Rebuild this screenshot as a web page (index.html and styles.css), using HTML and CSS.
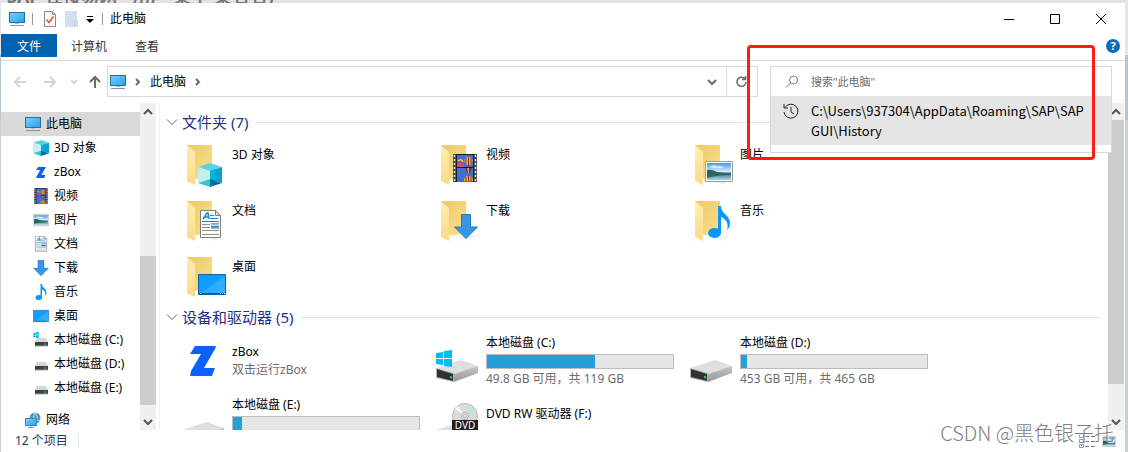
FILE: index.html
```
<!DOCTYPE html>
<html lang="zh-CN">

<head>
    <meta charset="UTF-8">
    <meta name="viewport" content="width=device-width, initial-scale=1.0">
    <title>此电脑</title>
    <link rel="stylesheet" href="styles.css">
</head>

<body>
    <!-- icon sprite -->
    <svg class="sprite" aria-hidden="true">
        <defs>
            <linearGradient id="gBlue" x1="0" y1="0" x2="1" y2="1">
                <stop offset="0" stop-color="#7fd0ff" />
                <stop offset="1" stop-color="#1fa2f5" />
            </linearGradient>
            <linearGradient id="gDesk" x1="0" y1="0" x2="1" y2="1">
                <stop offset="0" stop-color="#0c9bff" />
                <stop offset=".5" stop-color="#0f9dff" />
                <stop offset=".52" stop-color="#2ba9ff" />
                <stop offset="1" stop-color="#3db0ff" />
            </linearGradient>
            <linearGradient id="gFolder" x1="0" y1="0" x2="1" y2="1">
                <stop offset="0" stop-color="#ecc866" />
                <stop offset="1" stop-color="#fde18d" />
            </linearGradient>
            <linearGradient id="gFlap" x1="0" y1="0" x2="0" y2="1">
                <stop offset="0" stop-color="#ffedb0" />
                <stop offset="1" stop-color="#fbdc85" />
            </linearGradient>
            <linearGradient id="gSide" x1="0" y1="0" x2="0" y2="1">
                <stop offset="0" stop-color="#c6c6c8" />
                <stop offset="1" stop-color="#96969a" />
            </linearGradient>
            <linearGradient id="gSky" x1="0" y1="0" x2="0" y2="1">
                <stop offset="0" stop-color="#4f94e8" />
                <stop offset=".5" stop-color="#d5ecfb" />
                <stop offset=".6" stop-color="#3b7580" />
                <stop offset="1" stop-color="#a9d5e6" />
            </linearGradient>
        </defs>
        <symbol id="pc" viewBox="0 0 16 16">
            <rect x=".5" y="1.500" width="15" height="10" fill="url(#gBlue)" stroke="#2d6d96" />
            <path d="M6 12h4v1H6z" fill="#a9c3d3" />
            <path d="M1 14.500h14" stroke="#7e98a8" />
        </symbol>
        <symbol id="cube" viewBox="0 0 24 24">
            <path d="M12 0l12 4-12 4L0 4z" fill="#58d3e2" />
            <path d="M0 4l12 4v8L0 20z" fill="#c3eff0" />
            <path d="M24 4l-12 4v8l12 4z" fill="#0b9fd8" />
            <path d="M12 8l5-2v12l-5-2z" fill="#06b5d6" />
            <path d="M0 20l12-4v8z" fill="#2fc6d8" />
            <path d="M24 20l-12-4v8z" fill="#066f8a" />
        </symbol>
        <symbol id="zlogo" viewBox="0 0 26 30">
            <path d="M5 0h21l-1 3-11 19h11l-3 8H0l1-5L11 8H0z" fill="#0b62fb" />
        </symbol>
        <symbol id="film" viewBox="0 0 24 28">
            <path d="M0 0h24v28H0z" fill="#4a4a4a" />
            <path d="M1.500 1v27M22.500 1v27" stroke="#e6e6e6" stroke-width="1.500" stroke-dasharray="2 2" />
            <path d="M3 0h18v28H3z" fill="#1c1c1c" />
            <path d="M4 1h16v12H4zM4 14h16v14H4z" fill="#3d6fd6" />
            <path d="M4 10q3-3 7 0v3H4z" fill="#d8457c" />
            <path d="M5 7q3-3 5 1" stroke="#e9cf30" stroke-width="1.500" fill="none" />
            <circle cx="15.500" cy="7" r="4" fill="#f0b81c" />
            <path d="M13 4v6M15.500 3v9M18 4v6" stroke="#8c2a30" />
            <path d="M12 14h7l-2.500 5h-2z" fill="#84262c" />
            <path d="M14 14h2v5h-1z" fill="#e7a61c" />
            <path d="M11 27q0-5 4.500-5t4.500 5z" fill="#f0b81c" />
            <path d="M13 23v4M15.500 22v5M18 23v4" stroke="#8c2a30" />
        </symbol>
        <symbol id="photo" viewBox="0 0 28 21">
            <path d="M.5.5h27v20H.5z" fill="#fff" stroke="#9a9a9a" />
            <path d="M2 2h24v17H2z" fill="url(#gSky)" />
            <path d="M2 9q5-1 10 2l14 2v1q-14 0-24 3z" fill="#2f6560" />
            <path d="M4 6q4-3 8-1 5-1 7 2-8 1-15-1z" fill="#e9f5ff" opacity=".8" />
        </symbol>
        <symbol id="doc" viewBox="0 0 21 28">
            <path d="M.5.5h15l5 5v22H.5z" fill="#fbfbfb" stroke="#7f7f7f" />
            <path d="M15.500.5v5h5z" fill="#d8d8d8" stroke="#7f7f7f" />
            <path d="M3 9l4-6h1l1 6M5 7h4" fill="none" stroke="#1c86c8" stroke-width="1.500" />
            <path d="M10 5.500h4M10 8.500h8M2 11.500h17" stroke="#1c86c8" />
            <path d="M2 14.500h8M2 17.500h8M2 20.500h17M2 24.500h17" stroke="#8d8d8d" />
            <path d="M11 13h8v6h-8z" fill="url(#gSky)" />
        </symbol>
        <symbol id="down" viewBox="0 0 24 25">
            <path d="M7.500.5h9V13h7L12 24.500.5 13h7z" fill="#3797e6" stroke="#1f76c2" />
        </symbol>
        <symbol id="music" viewBox="0 0 22 32">
            <ellipse cx="6.500" cy="27" rx="6.500" ry="5" fill="#0a98f7" />
            <path d="M10 0h3c0 8 9 9 9 17 0 3-1 5-3 7 2-7-1-11-6-13v16h-3z" fill="#0a98f7" />
        </symbol>
        <symbol id="desk" viewBox="0 0 28 21">
            <path d="M.5.5h27v20H.5z" fill="url(#gDesk)" stroke="#0b66a8" />
            <path d="M1 19.500h26" stroke="#0a5c9c" />
            <path d="M2 19.500h1M22 19.500h1M24 19.500h1M26 19.500h1" stroke="#fff" />
        </symbol>
        <symbol id="drive16" viewBox="0 0 16 16">
            <path d="M4 6h9l2 4H2z" fill="#d6d7d9" />
            <path d="M2 10h13v4H2z" fill="#3d3f41" />
            <path d="M2 14h13" stroke="#a5a5a5" />
            <path d="M11 11.500h2v1h-2z" fill="#36e04a" />
        </symbol>
        <symbol id="win" viewBox="0 0 16 17">
            <path d="M0 3l7-1v6H0zM8 1l8-1v8H8zM0 9h7v6l-7-1zM8 9h8v8l-8-1z" fill="#00bcf2" />
        </symbol>
        <symbol id="drive" viewBox="0 0 48 48">
            <path d="M0 31l25-8 17 6-24 8z" fill="#dedfe3" />
            <path d="M18 37l24-8v7l-24 9z" fill="url(#gSide)" />
            <path d="M0 31l18 5v9L0 41z" fill="#b5b5b7" />
            <path d="M1 32l16 5v7L1 40z" fill="#303234" />
            <path d="M14 39l2 .6v2l-2-.6z" fill="#2de23c" />
        </symbol>
        <symbol id="folder" viewBox="0 0 48 48">
            <path d="M14 37h26l-6 6z" fill="#e8e8e8" opacity=".5" />
            <path d="M5 3h25v33l-17 1z" fill="url(#gFolder)" />
            <path d="M5 3l8 7v33l-8-4z" fill="url(#gFlap)" />
        </symbol>
        <symbol id="net" viewBox="0 0 16 16">
            <circle cx="10" cy="6" r="5.500" fill="#5a96b4" />
            <path d="M8 1q5 1 4 5t3 2M11 1q-4 3-2 6" fill="none" stroke="#bfe0ef" />
            <path d="M.5 6.500h11v7H.5z" fill="url(#gBlue)" stroke="#3d86b4" />
            <path d="M3 15.500h6M6 14v2" stroke="#87a2b3" />
        </symbol>
        <symbol id="chev" viewBox="0 0 12 12">
            <path d="M1 3.500l5 5 5-5" fill="none" stroke="currentColor" />
        </symbol>
        <symbol id="chevBold" viewBox="0 0 12 12">
            <path d="M2 4l4 4 4-4" fill="none" stroke="currentColor" stroke-width="2" />
        </symbol>
    </svg>

    <div class="behind" aria-hidden="true">SAP 在接易网 - 用户 某个 某名名)</div>

    <div class="window">
        <header class="titlebar">
            <svg class="i16"><use href="#pc" /></svg>
            <span class="sep"></span>
            <button class="quick" aria-label="属性">
                <svg width="12" height="16" viewBox="0 0 12 16">
                    <path d="M.5.5h8l3 3v12H.5z" fill="#fafafa" stroke="#8a8a8a" />
                    <path d="M8.500.5v3h3" fill="none" stroke="#8a8a8a" />
                    <path d="M2.500 8.500l2.500 3 4.500-6" fill="none" stroke="#e8561c" stroke-width="1.500" />
                </svg>
            </button>
            <button class="quick" aria-label="新建文件夹">
                <svg width="13" height="16" viewBox="0 0 13 16">
                    <path d="M0 0h12v9h1v7H0z" fill="#d3dff0" />
                    <path d="M9.500 15.500v-5l2-1.500" fill="none" stroke="#b9c9e2" />
                </svg>
            </button>
            <button class="quick caret" aria-label="自定义快速访问工具栏">
                <svg width="8" height="8" viewBox="0 0 8 8">
                    <path d="M1 1.500h6" stroke="#000" />
                    <path d="M0 4h8L4 8z" fill="#000" />
                </svg>
            </button>
            <span class="sep"></span>
            <h1>此电脑</h1>
            <div class="controls">
                <button aria-label="最小化"><svg width="10" height="10"><path d="M0 5.500h10" stroke="#000" /></svg></button>
                <button aria-label="最大化"><svg width="10" height="10"><path d="M.5.5h9v9h-9z" fill="none" stroke="#000" /></svg></button>
                <button aria-label="关闭"><svg width="10" height="10"><path d="M0 0l10 10M10 0L0 10" stroke="#000" /></svg></button>
            </div>
        </header>

        <nav class="tabs">
            <button class="tab file">文件</button>
            <button class="tab">计算机</button>
            <button class="tab">查看</button>
            <button class="help" aria-label="帮助">?</button>
        </nav>

        <div class="toolbar">
            <div class="history">
                <button aria-label="后退" disabled><svg width="12" height="12"><path d="M12 6H1M6 1L1 6l5 5" /></svg></button>
                <button aria-label="前进" disabled><svg width="12" height="12"><path d="M0 6h11M6 1l5 5-5 5" /></svg></button>
                <button class="recent" aria-label="最近浏览的位置" disabled><svg width="6" height="6"><path d="M0 1l3 3 3-3" /></svg></button>
                <button class="up" aria-label="上移"><svg width="12" height="13"><path d="M6 13V2M1 7l5-5 5 5" /></svg></button>
            </div>
            <div class="address">
                <svg class="i16"><use href="#pc" /></svg>
                <svg class="crumb" width="6" height="8"><path d="M1 1l3 3-3 3" /></svg>
                <a href="#">此电脑</a>
                <svg class="crumb" width="6" height="8"><path d="M1 1l3 3-3 3" /></svg>
                <button class="drop" aria-label="以前的位置"><svg width="12" height="12"><use href="#chevBold" /></svg></button>
            </div>
            <button class="refresh" aria-label="刷新">
                <svg width="12" height="12"><path d="M9 3a4.500 4.500 0 1 0 1 3M9.500 0v3.500H6" fill="none" stroke="#6a6a6a" stroke-width="1.500" /></svg>
            </button>
            <div class="search">
                <svg width="14" height="14" viewBox="0 0 14 14"><circle cx="8.500" cy="5" r="4" fill="none" stroke="#777" /><path d="M5.500 8L1 12.500" stroke="#777" /></svg>
                <input type="text" aria-label="搜索" placeholder="搜索&quot;此电脑&quot;">
                <div class="suggest">
                    <a href="#">
                        <svg width="16" height="16" viewBox="0 0 16 16">
                            <path d="M2 4.500A7 7 0 1 1 1 9M1 1v4h4M8 4v5l3 2" fill="none" stroke="#222" />
                        </svg>
                        <span>C:\Users\937304\AppData\Roaming\SAP\SAP GUI\History</span>
                    </a>
                </div>
            </div>
        </div>

        <main class="main">
            <ul class="tree">
                <li class="top selected"><svg class="i16"><use href="#pc" /></svg>此电脑</li>
                <li><svg class="i16"><use href="#cube" /></svg>3D 对象</li>
                <li><svg class="i16"><use href="#zlogo" x="3" y="3" width="10" height="11" /></svg>zBox</li>
                <li><svg class="i16"><use href="#film" /></svg>视频</li>
                <li><svg class="i16"><use href="#photo" /></svg>图片</li>
                <li><svg class="i16"><use href="#doc" /></svg>文档</li>
                <li><svg class="i16"><use href="#down" /></svg>下载</li>
                <li><svg class="i16"><use href="#music" /></svg>音乐</li>
                <li><svg class="i16"><use href="#desk" /></svg>桌面</li>
                <li><svg class="i16"><use href="#drive16" /><use href="#win" width="6" height="6" /></svg>本地磁盘 (C:)</li>
                <li><svg class="i16"><use href="#drive16" /></svg>本地磁盘 (D:)</li>
                <li><svg class="i16"><use href="#drive16" /></svg>本地磁盘 (E:)</li>
                <li class="top network"><svg class="i16"><use href="#net" /></svg>网络</li>
            </ul>
            <div class="scrollbar tree-scroll">
                <button class="flip" aria-label="向上滚动"><svg width="12" height="12"><use href="#chevBold" /></svg></button>
                <div class="track"><div class="thumb"></div></div>
                <button aria-label="向下滚动"><svg width="12" height="12"><use href="#chevBold" /></svg></button>
            </div>

            <div class="content">
                <section>
                    <h2><svg width="12" height="12"><use href="#chev" /></svg>文件夹 (7)</h2>
                    <div class="grid folders">
                        <div class="item"><svg class="i48"><use href="#folder" /><use href="#cube" x="16" y="21" width="24" height="24" /></svg><span>3D 对象</span></div>
                        <div class="item"><svg class="i48"><use href="#folder" /><use href="#film" x="17" y="12" width="24" height="28" /></svg><span>视频</span></div>
                        <div class="item"><svg class="i48"><use href="#folder" /><use href="#photo" x="15" y="19" width="28" height="21" /></svg><span>图片</span></div>
                        <div class="item"><svg class="i48"><use href="#folder" /><use href="#doc" x="18" y="12" width="21" height="28" /></svg><span>文档</span></div>
                        <div class="item"><svg class="i48"><use href="#folder" /><use href="#down" x="18" y="16" width="24" height="25" /></svg><span>下载</span></div>
                        <div class="item"><svg class="i48"><use href="#folder" /><use href="#music" x="18" y="8" width="22" height="32" /></svg><span>音乐</span></div>
                        <div class="item"><svg class="i48"><use href="#folder" /><use href="#desk" x="16" y="20" width="28" height="21" /></svg><span>桌面</span></div>
                    </div>
                </section>
                <section>
                    <h2><svg width="12" height="12"><use href="#chev" /></svg>设备和驱动器 (5)</h2>
                    <div class="grid devices">
                        <div class="item">
                            <svg class="i48"><use href="#zlogo" x="8" y="9" width="26" height="30" /></svg>
                            <div class="info"><p>zBox</p><p class="sub">双击运行zBox</p></div>
                        </div>
                        <div class="item">
                            <svg class="i48"><use href="#drive" /><use href="#win" y="13" width="16" height="17" /></svg>
                            <div class="info">
                                <p>本地磁盘 (C:)</p>
                                <div class="bar"><div style="width: 58%"></div></div>
                                <p class="sub">49.8 GB 可用，共 119 GB</p>
                            </div>
                        </div>
                        <div class="item">
                            <svg class="i48"><use href="#drive" /></svg>
                            <div class="info">
                                <p>本地磁盘 (D:)</p>
                                <div class="bar"><div style="width: 3%"></div></div>
                                <p class="sub">453 GB 可用，共 465 GB</p>
                            </div>
                        </div>
                        <div class="item">
                            <svg class="i48"><use href="#drive" /></svg>
                            <div class="info">
                                <p>本地磁盘 (E:)</p>
                                <div class="bar"><div style="width: 5%"></div></div>
                                <p class="sub"></p>
                            </div>
                        </div>
                        <div class="item">
                            <svg class="i48">
                                <use href="#drive" />
                                <circle cx="29" cy="17" r="12.500" fill="#d9dcdc" stroke="#b5b8b8" />
                                <path d="M29 17L19 10l3-3z" fill="#f6f8f8" />
                                <path d="M29 17l8-9 2 3z" fill="#a8eadb" />
                                <path d="M29 17l-11 1v-4z" fill="#eccde6" />
                                <circle cx="29" cy="17" r="3.500" fill="#eee" stroke="#aaa" />
                                <circle cx="29" cy="17" r="1.500" fill="#fff" stroke="#aaa" />
                                <path d="M16 21h26v12H16z" fill="#1d1d1d" />
                                <text class="dvd" x="29" y="30" text-anchor="middle">DVD</text>
                            </svg>
                            <div class="info"><p>DVD RW 驱动器 (F:)</p><p class="sub"></p></div>
                        </div>
                    </div>
                </section>
            </div>
            <div class="scrollbar content-scroll">
                <button class="flip" aria-label="向上滚动"><svg width="12" height="12"><use href="#chevBold" /></svg></button>
                <div class="track"><div class="thumb"></div></div>
                <button aria-label="向下滚动"><svg width="12" height="12"><use href="#chevBold" /></svg></button>
            </div>
        </main>

        <footer class="status">
            <span class="count">12 个项目</span>
            <button aria-label="详细信息">
                <svg width="16" height="14"><path d="M.5.5h4v3h-4zM.5 5.500h4v3h-4zM.5 10.500h4v3h-4z" fill="#fff" stroke="#999" /><path d="M6 2.500h4M12 2.500h4M6 7.500h4M12 7.500h4M6 12.500h4M12 12.500h4" stroke="#777" /><path d="M2 11.500h1" stroke="#d33" /></svg>
            </button>
            <button aria-label="大图标">
                <svg width="14" height="11"><use href="#photo" /></svg>
            </button>
        </footer>
    </div>

    <div class="marker"></div>
    <div class="watermark">CSDN @黑色银子托</div>
</body>

</html>
```
FILE: styles.css
```
* {
    margin: 0;
    padding: 0;
    box-sizing: border-box;
}

body {
    position: relative;
    height: 100vh;
    padding: 0 3px 0 1px;
    display: flex;
    flex-direction: column;
    overflow: hidden;
    background: linear-gradient(#e6e6e6 0 55px, #b4c6d3 55px 120px, #c9d1d5 120px);
    font-family: "Noto Sans", "Noto Sans CJK SC", sans-serif;
    font-size: 12px;
    line-height: 18px;
    color: #000;
}

svg {
    display: block;
    flex: none;
}

button {
    border: none;
    background: none;
    font: inherit;
    color: inherit;
    display: flex;
    align-items: center;
    justify-content: center;
}

a {
    color: inherit;
    text-decoration: none;
}

.sprite {
    position: absolute;
    width: 0;
    height: 0;
}

.i16 {
    width: 16px;
    height: 16px;
}

.i48 {
    width: 48px;
    height: 48px;
}

/* window that sits behind */
.behind {
    height: 3px;
    padding-left: 6px;
    display: flex;
    align-items: flex-end;
    overflow: hidden;
    white-space: pre;
    font-size: 18px;
    line-height: 14px;
    font-weight: bold;
    color: #777;
    background-color: #e3e3e3;
}

.window {
    flex: 1;
    min-height: 0;
    display: flex;
    flex-direction: column;
    background-color: #fff;
}

/* title bar */
.titlebar {
    height: 31px;
    padding-left: 8px;
    display: flex;
    align-items: center;
}

.sep {
    width: 1px;
    height: 12px;
    margin: 0 7px;
    background-color: #999;
}

.quick {
    margin: 0 5px 0 4px;
}

.quick.caret {
    margin: 0 1px 0 3px;
}

.titlebar h1 {
    font-size: 12px;
    font-weight: normal;
}

.controls {
    display: flex;
    margin-left: auto;
    padding-right: 1px;
}

.controls button {
    width: 46px;
    height: 30px;
}

/* ribbon tabs */
.tabs {
    display: flex;
    align-items: center;
    padding: 0 5px 3px 0;
    border-bottom: 1px solid #d9dadb;
}

.tab {
    height: 23px;
    padding: 2px 14px 0;
    color: #333;
}

.tab.file {
    width: 56px;
    background-color: #0063b1;
    color: #fff;
}

.help {
    width: 14px;
    height: 14px;
    margin-left: auto;
    border-radius: 50%;
    background-color: #0f6cbd;
    color: #fff;
    font-size: 11px;
    font-weight: bold;
}

/* address row */
.toolbar {
    display: flex;
    padding: 5px 13px 6px 0;
}

.history {
    width: 106px;
    display: flex;
    align-items: center;
    padding-left: 13px;
    gap: 18px;
}

.history path,
.crumb path {
    fill: none;
    stroke: #d5d5d5;
    stroke-width: 2;
}

.history .recent {
    margin: 0 -6px 0 -3px;
}

.history .up path,
.crumb path {
    stroke: #6a6a6a;
}

.address {
    flex: 1;
    height: 31px;
    display: flex;
    align-items: center;
    gap: 9px;
    padding-left: 2px;
    border: 1px solid #d9d9d9;
    color: #000;
}

.drop {
    width: 28px;
    height: 28px;
    margin-left: auto;
    color: #6a6a6a;
}

.refresh {
    width: 31px;
    margin-right: 12px;
    border: 1px solid #d9d9d9;
    border-left: none;
}

.search {
    position: relative;
    width: 342px;
    display: flex;
    align-items: center;
    gap: 12px;
    padding-left: 14px;
    border: 1px solid #d9d9d9;
}

.search input {
    flex: 1;
    min-width: 0;
    border: none;
    outline: none;
    background: none;
    font: inherit;
    font-size: 11px;
}

.search input::placeholder {
    color: #6d6d6d;
}

.suggest {
    position: absolute;
    z-index: 2;
    top: 100%;
    left: -1px;
    right: -1px;
    padding-bottom: 7px;
    background-color: #fff;
    border: 1px solid #d9d9d9;
    border-top: none;
}

.suggest a {
    display: flex;
    gap: 12px;
    padding: 5px 32px 4px 12px;
    background-color: #e5e5e5;
    font-family: "Noto Sans CJK SC", sans-serif;
    font-size: 13px;
    line-height: 20px;
}

.suggest svg {
    margin-top: 2px;
}

/* main area */
.main {
    flex: 1;
    min-height: 0;
    display: flex;
    overflow: hidden;
}

.tree {
    width: 139px;
    padding-top: 9px;
    list-style: none;
    overflow: hidden;
}

.tree li {
    height: 24px;
    display: flex;
    align-items: center;
    gap: 5px;
    padding-left: 32px;
    white-space: nowrap;
}

.tree .top {
    padding-left: 24px;
}

.tree .selected {
    background-color: #d9d9d9;
}

.tree .network {
    margin-top: 8px;
}

.scrollbar {
    width: 16px;
    display: flex;
    flex-direction: column;
    background-color: #f0f0f0;
    color: #555;
}

.scrollbar button {
    height: 17px;
}

.flip svg {
    transform: rotate(180deg);
}

.track {
    flex: 1;
    display: flex;
    flex-direction: column;
}

.thumb {
    height: 90%;
    background-color: #cdcdcd;
}

.tree-scroll {
    margin-right: 3px;
}

.tree-scroll .thumb {
    height: 51%;
    margin-top: auto;
    margin-bottom: 8px;
}

.content {
    flex: 1;
    min-width: 0;
    padding: 8px 8px 0 6px;
    border-left: 1px solid #f0f0f0;
    overflow: hidden;
}

.content-scroll {
    margin-right: 1px;
}

.content h2 {
    display: flex;
    align-items: center;
    gap: 4px;
    font-size: 15px;
    font-weight: normal;
    line-height: 22px;
    color: #1e3287;
}

.content h2 svg {
    color: #666;
}

.content h2::after {
    content: "";
    flex: 1;
    height: 1px;
    margin-left: 4px;
    background-color: #e2e2e2;
}

.grid {
    display: grid;
    grid-template-columns: repeat(auto-fill, 254px);
    gap: 8px 0;
    padding-left: 16px;
}

.folders {
    padding-top: 9px;
    padding-bottom: 4px;
}

.item {
    display: flex;
    gap: 2px;
}

.folders span {
    padding-top: 4px;
}

.devices {
    padding-top: 6px;
}

.devices .item {
    height: 54px;
    align-items: center;
}

.info {
    width: 188px;
}

.info p {
    min-height: 18px;
}

.sub {
    color: #6d6d6d;
}

.bar {
    height: 15px;
    margin: 2px 0 1px;
    background-color: #e6e6e6;
    border: 1px solid #bcbcbc;
}

.bar div {
    height: 100%;
    background-color: #26a0da;
}

.dvd {
    font-size: 10px;
    fill: #fff;
}

/* status bar */
.status {
    height: 22px;
    display: flex;
    align-items: center;
    gap: 7px;
    padding: 0 9px 0 14px;
    color: #1e395b;
}

.count {
    margin-right: auto;
    padding-right: 10px;
    border-right: 1px solid #e6e6e6;
    line-height: 14px;
}

/* highlight frame drawn over the search box */
.marker {
    position: absolute;
    z-index: 3;
    top: 45px;
    right: 33px;
    width: 348px;
    height: 115px;
    border: 3px solid #fd1d12;
    border-radius: 4px;
}

.watermark {
    position: absolute;
    z-index: 4;
    right: 14px;
    bottom: 4px;
    font-family: "Noto Sans CJK SC", sans-serif;
    font-size: 20px;
    font-weight: 300;
    line-height: 30px;
    color: #808080;
    text-shadow: 1px 1px 1px #fff;
}
```
